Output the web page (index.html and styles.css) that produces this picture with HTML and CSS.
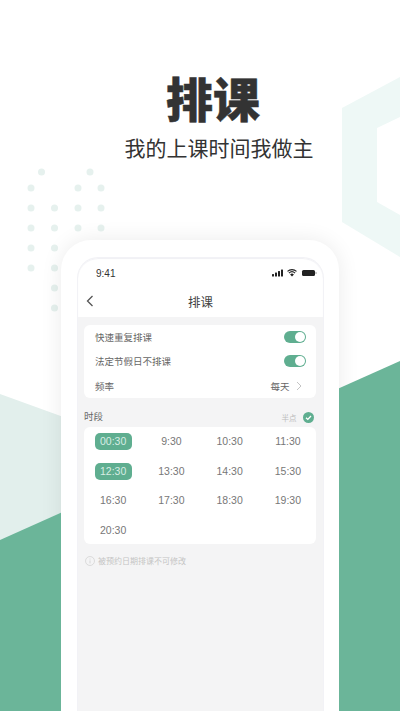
FILE: index.html
```html
<!DOCTYPE html>
<html lang="zh-CN">
<head>
    <meta charset="UTF-8">
    <meta name="viewport" content="width=device-width, initial-scale=1.0">
    <title>排课</title>
    <link rel="stylesheet" href="styles.css">
</head>
<body>
    <div class="poster">
        <svg class="backdrop" width="400" height="711" viewBox="0 0 400 711">
            <defs>
                <filter id="soft" x="-20%" y="-20%" width="140%" height="140%">
                    <feGaussianBlur stdDeviation="11"/>
                </filter>
            </defs>
            <path fill="#eef8f6" fill-rule="evenodd" d="M342 108L400 77V257L342 222ZM377 128V202L400 215V117Z"/>
            <g fill="#e6f1ee">
                <circle cx="41.5" cy="172" r="3.5"/><circle cx="90" cy="172" r="3.5"/>
                <circle cx="31" cy="188" r="3.5"/><circle cx="78" cy="188" r="3.5"/><circle cx="101" cy="188" r="3.5"/>
                <circle cx="31" cy="208" r="3.5"/><circle cx="54.5" cy="208" r="3.5"/><circle cx="78" cy="208" r="3.5"/><circle cx="101" cy="208" r="3.5"/>
                <circle cx="31" cy="228" r="3.5"/><circle cx="54.5" cy="228" r="3.5"/><circle cx="78" cy="228" r="3.5"/><circle cx="101" cy="228" r="3.5"/>
                <circle cx="31" cy="248" r="3.5"/><circle cx="54.5" cy="248" r="3.5"/>
                <circle cx="31" cy="268" r="3.5"/><circle cx="54.5" cy="268" r="3.5"/>
                <circle cx="54.5" cy="288" r="3.5"/><circle cx="54.5" cy="308" r="3.5"/>
            </g>
            <path fill="#e2efec" d="M0 394L80 423V540H0Z"/>
            <rect x="61" y="240" width="278" height="520" rx="30" fill="#000" opacity="0.08" filter="url(#soft)"/>
            <path fill="#6bb599" d="M0 540L400 361V711H0Z"/>
        </svg>

        <header class="headline">
            <h1>排课</h1>
            <p>我的上课时间我做主</p>
        </header>

        <div class="phone">
            <div class="screen">
                <div class="top-area">
                    <div class="status-bar">
                        <span class="clock">9:41</span>
                        <svg width="45" height="8" viewBox="0 0 45 8">
                            <g fill="#222">
                                <rect x="0" y="5" width="2" height="2.5" rx=".5"/>
                                <rect x="3" y="3.5" width="2" height="4" rx=".5"/>
                                <rect x="6" y="2" width="2" height="5.5" rx=".5"/>
                                <rect x="9" y="0.5" width="2" height="7" rx=".5"/>
                                <path d="M20 7.5L18.1 5.4a2.8 2.8 0 0 1 3.8 0Z"/>
                                <rect x="30" y="1" width="13" height="6" rx="1.5"/>
                                <rect x="43.5" y="3" width="1" height="2" fill="#999"/>
                            </g>
                            <g fill="none" stroke="#222" stroke-width="1.1">
                                <path d="M16.9 4.1a4.6 4.6 0 0 1 6.2 0"/>
                                <path d="M15.5 2.4a6.6 6.6 0 0 1 9 0"/>
                            </g>
                        </svg>
                    </div>
                    <div class="nav-bar">
                        <svg class="back" width="8" height="12" viewBox="0 0 8 12">
                            <path d="M6.5 1L1.5 6l5 5" fill="none" stroke="#555" stroke-width="1.3"/>
                        </svg>
                        <span class="nav-title">排课</span>
                    </div>
                </div>

                <div class="card settings">
                    <div class="setting-row">
                        <span>快速重复排课</span>
                        <span class="switch"></span>
                    </div>
                    <div class="setting-row">
                        <span>法定节假日不排课</span>
                        <span class="switch"></span>
                    </div>
                    <div class="setting-row">
                        <span>频率</span>
                        <span class="setting-value">
                            每天
                            <svg width="6" height="10" viewBox="0 0 6 10">
                                <path d="M1 1l4 4-4 4" fill="none" stroke="#c4c4c4" stroke-width="1"/>
                            </svg>
                        </span>
                    </div>
                </div>

                <div class="section-head">
                    <span>时段</span>
                    <span class="half-hour">
                        半点
                        <svg width="11" height="11" viewBox="0 0 11 11">
                            <circle cx="5.5" cy="5.5" r="5.5" fill="#5fae90"/>
                            <path d="M3 5.7l1.8 1.7L8 4" fill="none" stroke="#fff" stroke-width="1.3"/>
                        </svg>
                    </span>
                </div>

                <div class="card slots">
                    <span class="slot active">00:30</span>
                    <span class="slot">9:30</span>
                    <span class="slot">10:30</span>
                    <span class="slot">11:30</span>
                    <span class="slot active">12:30</span>
                    <span class="slot">13:30</span>
                    <span class="slot">14:30</span>
                    <span class="slot">15:30</span>
                    <span class="slot">16:30</span>
                    <span class="slot">17:30</span>
                    <span class="slot">18:30</span>
                    <span class="slot">19:30</span>
                    <span class="slot">20:30</span>
                </div>

                <div class="note">
                    <svg width="10" height="10" viewBox="0 0 10 10">
                        <circle cx="5" cy="5" r="4.5" fill="none" stroke="#d4d4d4" stroke-width=".8"/>
                        <path d="M5 2.6v.9M5 4.4v3" stroke="#cfcfcf" stroke-width=".8"/>
                    </svg>
                    <span>被预约日期排课不可修改</span>
                </div>
            </div>
        </div>
    </div>
</body>
</html>
```

FILE: styles.css
```css
* {
    box-sizing: border-box;
}

body {
    margin: 0;
    font-family: "Liberation Sans", "Noto Sans CJK SC", sans-serif;
    background-color: white;
}

.poster {
    position: relative;
    width: 400px;
    height: 711px;
    overflow: hidden;
    background-color: white;
}

.backdrop {
    position: absolute;
    top: 0;
    left: 0;
}

.headline {
    position: relative;
    padding: 71px 0 0 0;
    height: 240px;
    text-align: center;
    color: #333;
}

.headline h1 {
    margin: 0 0 0 26px;
    font-size: 47px;
    line-height: 60px;
    font-weight: 900;
    letter-spacing: 0;
    -webkit-text-stroke: 0.5px #333;
}

.headline p {
    margin: 3px 0 0 38px;
    font-size: 21px;
    line-height: 30px;
    font-weight: 400;
}

.phone {
    position: relative;
    width: 278px;
    height: 471px;
    margin-left: 61px;
    padding: 18px 16px 0 17px;
    background-color: white;
    border-radius: 30px 30px 0 0;
}

.screen {
    height: 453px;
    background-color: #f4f4f5;
    border-radius: 20px 20px 0 0;
    overflow: hidden;
    box-shadow: 0 0 0 1px #f2f2f6;
}

.top-area {
    height: 59px;
    padding: 0 6px 0 12px;
    background-color: white;
    border-radius: 20px 20px 0 0;
    box-shadow: inset 0 1px 1px #f0f0f4;
}

.status-bar {
    display: flex;
    justify-content: space-between;
    align-items: center;
    height: 30px;
    padding: 0 0 0 6px;
}

.clock {
    font-size: 10px;
    color: #333;
}

.nav-bar {
    position: relative;
    height: 29px;
    display: flex;
    align-items: center;
    justify-content: center;
    padding-right: 6px;
}

.back {
    position: absolute;
    left: -4px;
    top: 7px;
}

.nav-title {
    font-size: 12.5px;
    color: #444;
    margin-bottom: 2px;
}

.card {
    margin: 8px 7px 0 6px;
    background-color: white;
    border-radius: 6px;
}

.settings {
    height: 73px;
    padding: 0 10px 0 11px;
}

.setting-row {
    height: 24.3px;
    display: flex;
    justify-content: space-between;
    align-items: center;
    font-size: 9.5px;
    color: #666;
}

.switch {
    position: relative;
    width: 22px;
    height: 12px;
    border-radius: 6px;
    background-color: #5fae90;
}

.switch::after {
    content: "";
    position: absolute;
    top: 1px;
    right: 1px;
    width: 10px;
    height: 10px;
    border-radius: 50%;
    background-color: white;
}

.setting-value {
    display: flex;
    align-items: center;
    gap: 6px;
    font-size: 9.5px;
    color: #666;
    margin-right: 4.5px;
}

.section-head {
    display: flex;
    justify-content: space-between;
    align-items: flex-end;
    height: 29px;
    padding-bottom: 4px;
    margin: 0 9.5px 0 6px;
    font-size: 9.5px;
    color: #666;
}

.half-hour {
    display: flex;
    align-items: center;
    gap: 6px;
    font-size: 7.5px;
    color: #bbb;
}

.card.slots {
    margin-top: 0;
    height: 117px;
    padding: 0;
    display: grid;
    grid-template-columns: repeat(4, 58.25px);
    grid-auto-rows: 29.6px;
    align-items: center;
    justify-items: center;
}

.slot {
    font-size: 10.5px;
    line-height: 17px;
    color: #777;
    padding: 0 5px;
}

.slot.active {
    width: 37px;
    padding: 0;
    text-align: center;
    background-color: #5fae90;
    border-radius: 5px;
    color: #d8ede4;
}

.note {
    display: flex;
    align-items: center;
    gap: 3px;
    margin: 11px 0 0 7px;
    font-size: 8px;
    color: #c4c4c4;
}
```
